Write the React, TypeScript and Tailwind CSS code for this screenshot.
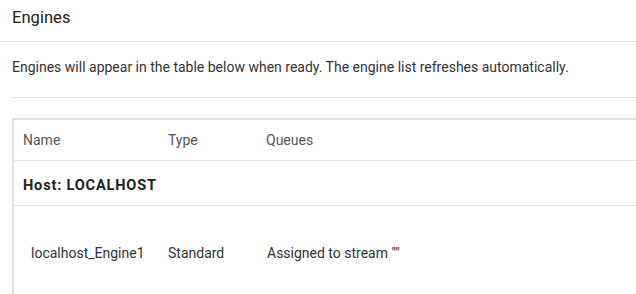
export default function App() {
  return (
    <div className="w-[636px] h-[294px] overflow-hidden bg-white font-['Roboto',sans-serif]">
      <div className="h-[42px] border-b border-[#e0e0e0] pl-3 pt-[7px] text-[16.6px] leading-[21px] text-[#212121]">
        Engines
      </div>
      <div className="pl-3">
        <div className="h-[56px] border-b border-[#e0e0e0] pt-[16px] text-[14px] leading-[19px] text-[#333]">
          Engines will appear in the table below when ready. The engine list refreshes automatically.
        </div>
        <div className="mt-[20px] w-[660px] border-t-2 border-l-2 border-[#e0e0e0] text-[14px]">
          <div className="flex h-[41px] items-center border-b border-[#e0e0e0] pt-[1px] text-[#555]">
            <div className="w-[154px] pl-[9px]">Name</div>
            <div className="w-[98px]">Type</div>
            <div>Queues</div>
          </div>
          <div className="flex h-[45px] items-center border-b border-[#e0e0e0] pl-[9px] pt-[6px] text-[14.6px] font-bold tracking-[0.8px] text-[#222]">
            Host: LOCALHOST
          </div>
          <div className="flex h-[92px] items-center pt-[2px] text-[#333]">
            <div className="w-[154px] pl-[17px]">localhost_Engine1</div>
            <div className="w-[99px]">Standard</div>
            <div>Assigned to stream ""</div>
          </div>
        </div>
      </div>
    </div>
  );
}
